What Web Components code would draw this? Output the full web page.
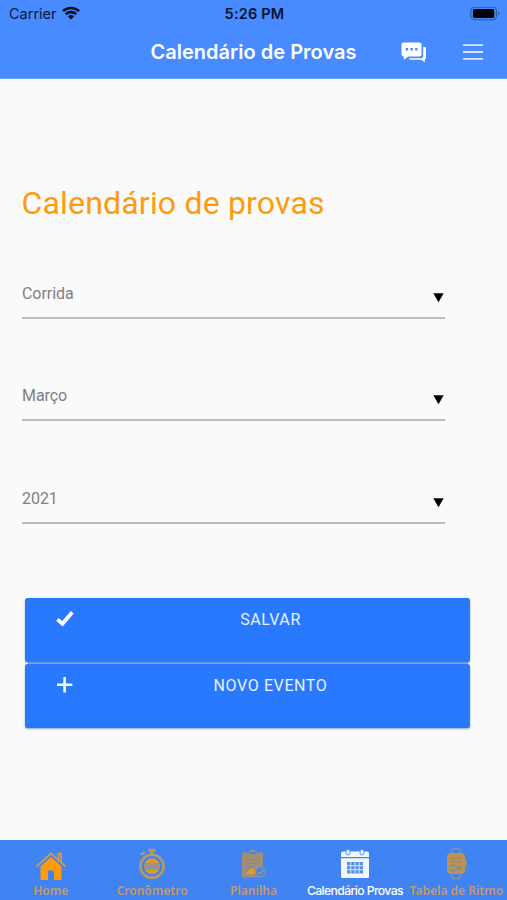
<!DOCTYPE html>
<html lang="pt">
<head>
<meta charset="utf-8">
<title>Calendário de Provas</title>
<style>
html,body{margin:0;height:100%;background:#fafafa}
</style>
</head>
<body>
<race-app></race-app>
<script>
function define(name, html) {
  const t = document.createElement('template');
  t.innerHTML = html;
  customElements.define(name, class extends HTMLElement {
    constructor() {
      super();
      this.attachShadow({mode: 'open'}).append(t.content.cloneNode(true));
    }
  });
}

define('status-bar', `<style>
:host{display:grid;grid-template-columns:1fr auto 1fr;align-items:center;height:27px;padding:0 7px 0 9px;box-sizing:border-box;color:#0a1a38;font:400 14.5px/27px Inter,"Liberation Sans",sans-serif}
.l{display:flex;align-items:center;gap:5.500px}
.l svg{margin-top:-2px}
.t{font-weight:600;letter-spacing:.2px;color:#06142e}
.b{justify-self:end}
svg{display:block}
</style>
<div class="l"><span>Carrier</span>
<svg width="18" height="14" viewBox="0 0 19 14" fill="none" stroke="#050d1e" stroke-width="2.7"><path d="M1 5.1a12.2 12.2 0 0 1 17 0"/><path d="M4 8.3a7.9 7.9 0 0 1 11 0"/><path d="M9.5 13.8 6.3 10.6a4.6 4.6 0 0 1 6.4 0z" fill="#050d1e" stroke="none"/></svg></div>
<span class="t">5:26 PM</span>
<svg class="b" width="30" height="14" viewBox="0 0 30 14"><rect x=".8" y=".3" width="25.6" height="12.4" rx="3.6" fill="none" stroke="#2c5aa8" stroke-width="1.1"/><rect x="2.9" y="2" width="21.400" height="9" rx="1.800" fill="#000"/><path d="M27.8 4.3c1.8.7 1.8 3.7 0 4.4z" fill="#2c5aa8"/></svg>`);

define('nav-bar', `<style>
:host{display:grid;grid-template-columns:1fr auto 1fr;align-items:center;height:52px;box-sizing:border-box;border-bottom:1px solid #6ea4fb;color:#fff;font:600 20px/50px Inter,"Liberation Sans",sans-serif}
.a{display:flex;align-items:center;justify-content:space-between;padding:0 24px 0 44.500px}
svg{display:block}
.a svg{margin-top:-1px}
.t{letter-spacing:.02px;margin-top:-1px}
</style>
<span></span><span class="t"><slot></slot></span>
<div class="a">
<svg width="26" height="21" viewBox="0 0 26 21" fill="#fff"><path fill-rule="evenodd" d="M2.5.5h16a2 2 0 0 1 2 2v10a2 2 0 0 1-2 2H7L2.8 18v-3.5h-.3a2 2 0 0 1-2-2v-10a2 2 0 0 1 2-2zM4.7 6v2.4h2.4V6zm4.7 0v2.4h2.4V6zm4.7 0v2.4h2.4V6z"/><path d="M22.2 4.8h.8a2 2 0 0 1 2 2v9a2 2 0 0 1-1.2 1.8V20.500L20.500 17.800H9.500a1.500 1.500 0 0 1-1.500-1.500h12.200a2 2 0 0 0 2-2z"/></svg>
<svg width="20" height="16" viewBox="0 0 20 16" stroke="#d9e7ff" stroke-width="1.8"><path d="M0 1.200h20M0 8h20M0 14.800h20"/></svg>
</div>`);

define('select-field', `<style>
:host{display:flex;justify-content:space-between;box-sizing:border-box;height:49px;border-bottom:2px solid #bdbdbd;color:#808080;font:400 16px/48px Roboto,sans-serif}
svg{display:block;margin:23px 1px 0 0}
span{letter-spacing:-.05px}
</style>
<span><slot></slot></span><svg width="11" height="10" viewBox="0 0 11 10"><path d="M.3.300h10.400L5.500 9.200z" fill="#000"/></svg>`);

define('action-button', `<style>
:host{display:grid;grid-template-columns:79px 1fr;height:64px;box-sizing:border-box;background:#2979ff;color:#eaf2ff;border-radius:2.500px;box-shadow:0 1px 2px rgba(30,80,160,.45);font:400 16px/43px Roboto,sans-serif;letter-spacing:.6px}
.i{display:flex;align-items:center;justify-content:center;height:43px}
.t{text-align:center;padding-right:33px}
</style>
<div class="i"><slot name="icon"></slot></div><div class="t"><slot></slot></div>`);

define('tab-item', `<style>
:host{flex:1 1 0;min-width:0;display:flex;flex-direction:column;align-items:center;color:#c59866;font:600 12px/15px "Noto Sans",sans-serif;white-space:nowrap}
.i{height:43px;display:flex;align-items:flex-end;box-sizing:border-box;padding-bottom:3px}
:host([active]){color:#fff;font-family:Inter,sans-serif;font-weight:500;letter-spacing:-.6px}
:host([active]) span{font-size:12.200px}
</style>
<div class="i"><slot name="icon"></slot></div><span><slot></slot></span>`);

define('race-app', `<style>
:host{display:flex;flex-direction:column;height:900px;width:507px;overflow:hidden;background:#fafafa}
header{background:#488aff;height:79px}
main{flex:1;padding:99px 37px 0 22px;display:flex;flex-direction:column}
h1{margin:0 0 0 -.500px;font:400 32px/50px Roboto,sans-serif;letter-spacing:.18px;color:#ff9a0f}
.f{display:flex;flex-direction:column;gap:53.600px;margin:41.900px 25px 0 0;width:423px}
.b{display:flex;flex-direction:column;gap:2px;margin:73.900px 0 0 3px;background:linear-gradient(#8eb4f5,#8eb4f5) center/440px 3px no-repeat}
footer{height:60px;background:#4084f4;display:flex;box-sizing:border-box}
svg{display:block}
</style>
<header><status-bar></status-bar><nav-bar>Calendário de Provas</nav-bar></header>
<main>
<h1>Calendário de provas</h1>
<div class="f"><select-field>Corrida</select-field><select-field>Março</select-field><select-field>2021</select-field></div>
<div class="b">
<action-button><svg slot="icon" width="18" height="16" viewBox="0 0 18 16" fill="none" stroke="#fff" stroke-width="3.800"><path d="M1.500 8.300 6.500 12.800 16.200 1.300"/></svg>SALVAR</action-button>
<action-button><svg slot="icon" width="16" height="16" viewBox="0 0 16 16" stroke="#fff" stroke-width="2.500"><path d="M7.600 0v15.400M0 7.700h15.300"/></svg>NOVO EVENTO</action-button>
</div>
</main>
<footer>
<tab-item><svg slot="icon" width="32" height="30" viewBox="0 0 32 30"><path d="M5.500 16.500 16 7l10.500 9.500V30H19v-9.500h-6V30H5.500z" fill="#ff9a0c"/><path d="M1.500 16.500 16 3.500l14.500 13M23.500 10V3.500h2.500v8.800" fill="none" stroke="#c99a52" stroke-width="1.800"/></svg>Home</tab-item>
<tab-item><svg slot="icon" width="28" height="32" viewBox="0 0 28 32"><g fill="none" stroke="#b99862"><circle cx="14" cy="18.300" r="11.600" stroke-width="2.600"/><path d="M10.500 2.200h7M14 2v5" stroke-width="3"/><path d="M2.800 6.500 7 4.500" stroke-width="2"/></g><circle cx="14" cy="18.300" r="8" fill="#d99a35"/><path d="M6.500 15.200h15v6h-15z" fill="#83909f"/><path d="M8 16.500h3v3.500H8zm5 0h3v3.500h-3zm5 0h2.500v3.500H18z" fill="none" stroke="#b29a70" stroke-width=".8"/></svg>Cronômetro</tab-item>
<tab-item><svg slot="icon" width="26" height="32" viewBox="0 0 26 32"><path d="M2 4.500h5.500L10 1.500h4l2.500 3H22V19a5.500 5.500 0 0 0-5 10.500H2a1 1 0 0 1-1-1v-23a1 1 0 0 1 1-1z" fill="#a18e79"/><path d="M7 6.500h10L14.500 3.500h-5z" fill="#4685ed" stroke="#a18e79"/><path d="M5 11.500h13M5 15.500h13M5 19h9" stroke="#7e8a9e" stroke-width="1"/><path d="M5 26q4-7 9-5v5z" fill="#e29a2c"/><circle cx="19.500" cy="24" r="5" fill="#4b84db" stroke="#8993a3" stroke-width="1.200"/><path d="m17 24 2 2 3.500-4" fill="none" stroke="#8f95a0" stroke-width="1.200"/></svg>Planilha</tab-item>
<tab-item active><svg slot="icon" width="28" height="32" viewBox="0 0 28 32"><path d="M0 5.500a2 2 0 0 1 2-2h24a2 2 0 0 1 2 2V9H0zM0 10.300h28V29a1 1 0 0 1-1 1H1a1 1 0 0 1-1-1z" fill="#f2f7ff"/><path d="M5 3.500a2 2 0 1 1 4 0V5a2 2 0 0 1-4 0zm14 0a2 2 0 1 1 4 0V5a2 2 0 0 1-4 0z" fill="#e9f1ff" stroke="#5e97f6" stroke-width="1"/><path d="M6 14h16v11.500H6z" fill="#588ee9"/><path d="M6 17.700h16M6 21.700h16M9.800 14v11.500M14 14v11.500M18.200 14v11.500" stroke="#d8e6ff" stroke-width="1"/></svg>Calendário Provas</tab-item>
<tab-item><svg slot="icon" width="22" height="32" viewBox="0 0 22 32"><path d="M6 5 7.500 1h7L16 5M6 26l1.500 4.500h7L16 26" fill="none" stroke="#8490a5" stroke-width="1.400"/><rect x="2" y="5" width="18" height="21" rx="4" fill="#bd9354"/><path d="M20 12.500h1.500v6H20z" fill="#bd9354"/><path d="M6 9.500h4v4H6zm6.500 0H16V14h-3.500z" fill="none" stroke="#8f8c80"/><path d="M5 18.500q3-2.500 6 0t6 0M5 22q3 2 6 0t6 0" fill="none" stroke="#728baf" stroke-width="1.500"/></svg>Tabela de Ritmo</tab-item>
</footer>`);
</script>
</body>
</html>
